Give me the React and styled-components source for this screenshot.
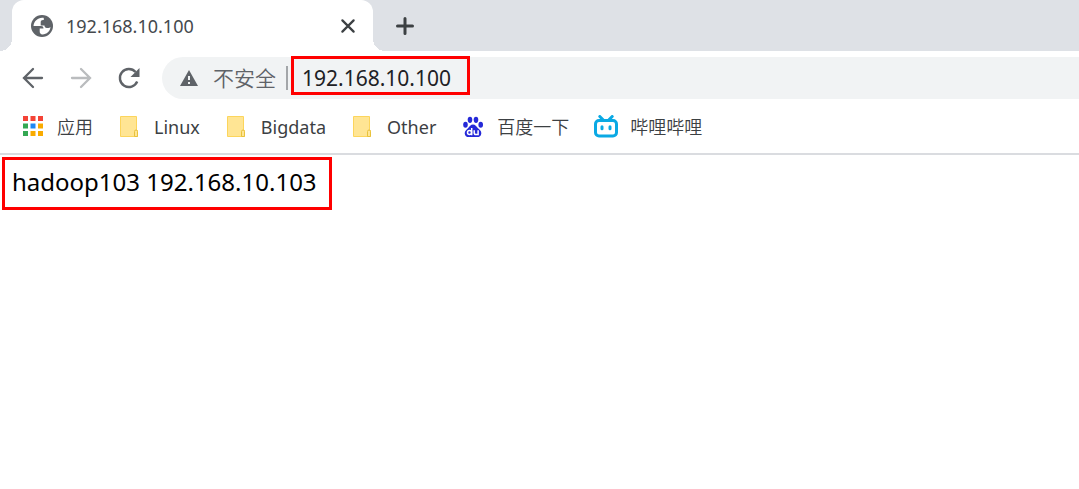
import React from "react";
import styled, { createGlobalStyle } from "styled-components";

const GlobalStyle = createGlobalStyle`
  *,
  *::before,
  *::after {
    box-sizing: border-box;
  }

  body {
    margin: 0;
    background: #fff;
    font-family: "Noto Sans", "Noto Sans CJK SC", sans-serif;
  }
`;

const Browser = styled.div`
  display: flex;
  flex-direction: column;
  min-height: 100vh;
  overflow: hidden;
`;

const TabStrip = styled.div`
  display: flex;
  align-items: center;
  height: 51px;
  padding-left: 12px;
  background: #dee1e6;
`;

const Tab = styled.div`
  position: relative;
  display: flex;
  align-items: center;
  flex: 0 1 361px;
  height: 100%;
  padding: 0 16px 0 18px;
  background: #fff;
  border-radius: 12px 12px 0 0;

  &::before,
  &::after {
    content: "";
    position: absolute;
    bottom: 0;
    width: 12px;
    height: 12px;
  }

  &::before {
    right: 100%;
    background: radial-gradient(circle at 0 0, transparent 12px, #fff 12px);
  }

  &::after {
    left: 100%;
    background: radial-gradient(circle at 100% 0, transparent 12px, #fff 12px);
  }
`;

const TabTitle = styled.span`
  flex: 1;
  margin-left: 12px;
  font-size: 18px;
  line-height: 24px;
  color: #45494d;
`;

const IconButton = styled.button`
  display: flex;
  align-items: center;
  justify-content: center;
  width: ${props => props.$size}px;
  height: ${props => props.$size}px;
  padding: 0;
  border: 0;
  background: none;
  color: ${props => props.$color || "#5f6368"};
`;

const NewTab = styled(IconButton)`
  margin-left: 20px;
`;

const Toolbar = styled.div`
  display: flex;
  align-items: center;
  gap: 24px;
  height: 54px;
  padding-left: 21px;
`;

const AddressBar = styled.div`
  display: flex;
  align-items: center;
  flex: 1;
  height: 42px;
  margin-left: -3px;
  padding-left: 17px;
  border-radius: 21px 0 0 21px;
  background: #f1f3f4;
`;

const Security = styled.label`
  margin-left: 14px;
  padding-right: 10px;
  border-right: 2px solid #a3a6a9;
  font-size: 21px;
  font-weight: 350;
  line-height: 24px;
  color: #5f6368;
`;

const UrlField = styled.div`
  position: relative;
  flex: 1;
  margin-left: 14px;

  &::after {
    content: "";
    position: absolute;
    top: -7px;
    left: -11px;
    width: 179px;
    height: 39px;
    border: 3px solid #f00;
    pointer-events: none;
  }
`;

const UrlInput = styled.input`
  display: block;
  width: 100%;
  height: 30px;
  padding: 0;
  border: 0;
  outline: 0;
  background: none;
  font-family: inherit;
  font-size: 21px;
  color: #202124;
`;

const Bookmarks = styled.nav`
  display: flex;
  align-items: center;
  gap: 25px;
  height: 50px;
  padding: 0 21px 5px;
  border-bottom: 2px solid #dadce0;
`;

const Bookmark = styled.a`
  display: flex;
  align-items: center;
  gap: 12px;
  font-size: 18px;
  line-height: 24px;
  white-space: nowrap;
  color: #3c4043;
  text-decoration: none;

  &:lang(zh) {
    font-weight: 350;
  }
`;

const Page = styled.main`
  padding: 2px;
`;

const Message = styled.p`
  width: fit-content;
  margin: 0;
  padding: 7px 12px 10px 7px;
  border: 3px solid #f00;
  font-size: 24px;
  line-height: 30px;
  color: #000;
`;

const Globe = () => (
  <svg width="24" height="24" viewBox="0 0 24 24">
    <circle cx="12" cy="12" r="11" fill="#5f6368" />
    <path
      fill="#fff"
      d="M13.500 3.800C8.300 3 3.900 6.800 3.500 12h7.500c1.700 0 2.500.8 2.500 2.500h-3.800v3c0 1.800 1 2.900 2.800 2.900 4.200 0 7.600-3.200 8-7.400-.6.700-1.300 1-2.200 1h-1.500c-1.500 0-2.300-.9-2.300-2.400h-3.800V8.300c0-1.400.9-2.200 2.300-2.200h.8c0-1 .2-1.700-.3-2.300z"
    />
  </svg>
);

const Line = ({ d, size = 24, width = 2 }) => (
  <svg width={size} height={size} viewBox="0 0 24 24">
    <path
      d={d}
      fill="none"
      stroke="currentColor"
      strokeWidth={width}
      strokeLinecap="round"
    />
  </svg>
);

const Reload = () => (
  <svg width="24" height="24" viewBox="0 0 24 24" fill="none">
    <path
      d="M20.200 15.500A9 9 0 1 1 18.600 6"
      stroke="currentColor"
      strokeWidth="2.400"
    />
    <path d="M22.500 2v9h-9z" fill="currentColor" />
  </svg>
);

const Warning = () => (
  <svg width="20" height="18" viewBox="0 0 20 18">
    <path d="M10 1L19 17H1z" fill="#5f6368" />
    <path d="M9 7h2v4H9zM9 13h2v2H9z" fill="#f1f3f4" />
  </svg>
);

const appColors = [
  "#f44336",
  "#f44336",
  "#f44336",
  "#34a853",
  "#1e88f5",
  "#f9ab00",
  "#34a853",
  "#f9ab00",
  "#f9ab00"
];

const Apps = () => (
  <svg width="24" height="24" viewBox="0 0 24 24">
    {appColors.map((color, i) => (
      <rect
        key={i}
        x={2 + (i % 3) * 7.5}
        y={1 + Math.floor(i / 3) * 7.5}
        width="5"
        height="5"
        fill={color}
      />
    ))}
  </svg>
);

const Folder = () => (
  <svg width="24" height="24" viewBox="0 0 24 24">
    <path
      d="M2.500 1.500h16v14h1v6h-17z"
      fill="#ffe594"
      stroke="#fcd55c"
    />
    <path
      d="M16.500 21.500v-5q0-1.500 1.500-1.500t1.500 1.500v5z"
      fill="#ffe594"
      stroke="#e8c23c"
    />
  </svg>
);

const Baidu = () => (
  <svg width="24" height="24" viewBox="0 0 24 24">
    <g fill="#2529d8">
      <ellipse cx="4.500" cy="9.800" rx="2.300" ry="3" />
      <ellipse cx="9" cy="4.800" rx="2.300" ry="3.100" />
      <ellipse cx="15" cy="4.800" rx="2.300" ry="3.100" />
      <ellipse cx="19.700" cy="9.800" rx="2.300" ry="3" />
      <path d="M12 9.500c2.400 0 3.300 2 4.800 3.500 1.900 1.800 3.700 3 3.500 5.400-.2 2.600-2 3.600-4.200 3.600H7.900c-2.300 0-4.100-1.200-4.200-3.600-.1-2.500 1.800-3.700 3.500-5.400 1.500-1.500 2.300-3.500 4.800-3.500z" />
    </g>
    <g fill="none" stroke="#fff" strokeWidth="1.500">
      <circle cx="8.500" cy="17.500" r="2" />
      <path d="M10.700 13v7.200M13.200 15.300v2.500q0 1.800 1.700 1.800h2.200v-4.300" />
    </g>
  </svg>
);

const Bilibili = () => (
  <svg width="24" height="24" viewBox="0 0 24 24" fill="none" stroke="#0aa9e4">
    <rect x="1.500" y="5.500" width="21" height="15.500" rx="3.500" strokeWidth="3" />
    <path
      d="M5.800 1.500l3 3M18.200 1.500l-3 3M8 11.800v2M16 11.800v2"
      strokeWidth="3"
      strokeLinecap="round"
    />
  </svg>
);

const bookmarks = [
  { title: "应用", Icon: Apps, lang: "zh" },
  { title: "Linux", Icon: Folder },
  { title: "Bigdata", Icon: Folder },
  { title: "Other", Icon: Folder },
  { title: "百度一下", Icon: Baidu, lang: "zh" },
  { title: "哔哩哔哩", Icon: Bilibili, lang: "zh" }
];

const App = () => (
  <Browser>
    <GlobalStyle />
    <TabStrip>
      <Tab>
        <Globe />
        <TabTitle>192.168.10.100</TabTitle>
        <IconButton $size={18} $color="#3c4043" aria-label="Close tab">
          <Line size={18} width={3} d="M4.500 4.500l15 15M19.500 4.500l-15 15" />
        </IconButton>
      </Tab>
      <NewTab $size={24} $color="#3c4043" aria-label="New tab">
        <Line width={3} d="M12 4.500v15M4.500 12h15" />
      </NewTab>
    </TabStrip>
    <Toolbar>
      <IconButton $size={24} aria-label="Back">
        <Line width={2.3} d="M21 12H3M12 3l-9 9 9 9" />
      </IconButton>
      <IconButton $size={24} $color="#babcbe" aria-label="Forward">
        <Line width={2.3} d="M3 12h18M12 3l9 9-9 9" />
      </IconButton>
      <IconButton $size={24} aria-label="Reload">
        <Reload />
      </IconButton>
      <AddressBar>
        <Warning />
        <Security htmlFor="url">不安全</Security>
        <UrlField>
          <UrlInput id="url" type="text" defaultValue="192.168.10.100" />
        </UrlField>
      </AddressBar>
    </Toolbar>
    <Bookmarks>
      {bookmarks.map(({ title, Icon, lang }) => (
        <Bookmark key={title} href="#" lang={lang}>
          <Icon />
          {title}
        </Bookmark>
      ))}
    </Bookmarks>
    <Page>
      <Message>hadoop103 192.168.10.103</Message>
    </Page>
  </Browser>
);

export default App;
